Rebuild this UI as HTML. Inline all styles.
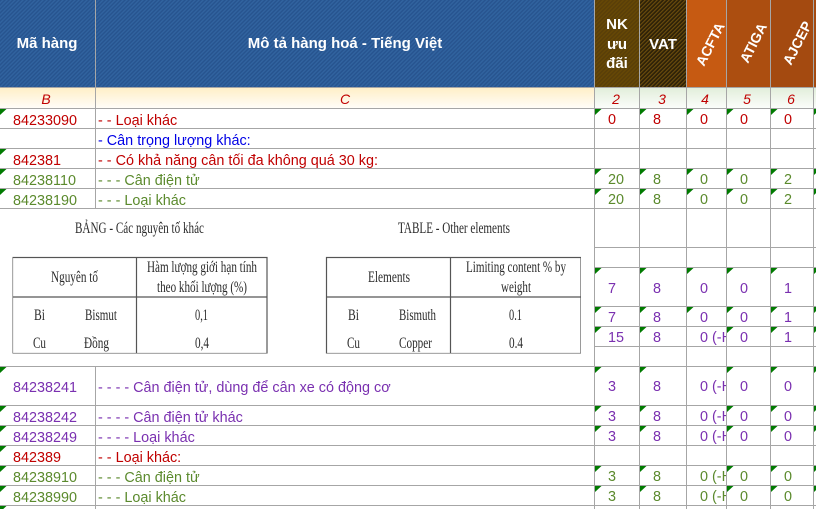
<!DOCTYPE html>
<html><head><meta charset="utf-8"><style>
html,body{margin:0;padding:0;background:#fff}
svg{display:block}
text{font-family:"Liberation Sans",sans-serif}
.r{fill:#c00000}.b{fill:#0000e6}.g{fill:#5b8a2d}.p{fill:#7a30b0}
.t{font-size:14.4px}
.h{font-size:15px;font-weight:bold;fill:#fff}
.h2{font-size:14px;font-weight:bold;fill:#fff}
.i{font-size:14px;font-style:italic;fill:#c00000}
.s text{font-family:"Liberation Serif",serif;font-size:16px;fill:#2b2b2b}
</style></head><body>
<svg xmlns="http://www.w3.org/2000/svg" width="816" height="509" viewBox="0 0 816 509">
<defs>
<pattern id="pb" width="2.83" height="2.83" patternUnits="userSpaceOnUse" patternTransform="rotate(-45)"><rect width="2.83" height="2.83" fill="#31639f"/><rect width="2.83" height="1.41" fill="#27548f"/></pattern>
<pattern id="pn" width="2.83" height="2.83" patternUnits="userSpaceOnUse" patternTransform="rotate(-45)"><rect width="2.83" height="2.83" fill="#664806"/><rect width="2.83" height="1.41" fill="#593e08"/></pattern>
<pattern id="pv" width="2.83" height="2.83" patternUnits="userSpaceOnUse" patternTransform="rotate(-45)"><rect width="2.83" height="2.83" fill="#2c2008"/><rect width="2.83" height="1.2" fill="#6a4c0c"/></pattern>
<linearGradient id="gy" x1="0" y1="0" x2="0" y2="1"><stop offset="0" stop-color="#ffefc8"/><stop offset="1" stop-color="#fffdf8"/></linearGradient>
<linearGradient id="gg" x1="0" y1="0" x2="0" y2="1"><stop offset="0" stop-color="#e2eedb"/><stop offset="1" stop-color="#fbfdfa"/></linearGradient>
<clipPath id="c"><rect x="686" y="300" width="40" height="209"/></clipPath>
<filter id="bl" x="0" y="0" width="100%" height="100%"><feGaussianBlur stdDeviation="0.35"/></filter>
<path id="tr" d="M0 0H6.5L0 6Z" fill="#007a00"/>
</defs>

<!-- header -->
<rect x="0" y="0" width="594" height="87" fill="url(#pb)"/>
<rect x="594" y="0" width="45" height="87" fill="url(#pn)"/>
<rect x="639" y="0" width="47" height="87" fill="url(#pv)"/>
<rect x="686" y="0" width="40" height="87" fill="#c65a12"/>
<rect x="726" y="0" width="44" height="87" fill="#ac4e10"/>
<rect x="770" y="0" width="46" height="87" fill="#a44a10"/>

<!-- label row -->
<rect x="0" y="88" width="594" height="20" fill="url(#gy)"/>
<rect x="594" y="88" width="222" height="20" fill="url(#gg)"/>

<!-- image area -->
<g class="s" filter="url(#bl)">
<text x="75" y="233" textLength="129" lengthAdjust="spacingAndGlyphs">BẢNG - Các nguyên tố khác</text>
<text x="398" y="233" textLength="112" lengthAdjust="spacingAndGlyphs">TABLE - Other elements</text>
<g fill="none" stroke="#555" stroke-width="1.2">
<rect x="12.5" y="257.5" width="254.5" height="96"/><path d="M12.5 297H267M136.5 257.5V353.5"/>
<rect x="326.5" y="257.5" width="254.5" height="96"/><path d="M326.5 297H581M450.5 257.5V353.5"/>
</g>
<text x="51" y="282" textLength="47" lengthAdjust="spacingAndGlyphs">Nguyên tố</text>
<text x="147" y="272" textLength="110" lengthAdjust="spacingAndGlyphs">Hàm lượng giới hạn tính</text>
<text x="157" y="292" textLength="90" lengthAdjust="spacingAndGlyphs">theo khối lượng (%)</text>
<text x="34" y="320" textLength="11" lengthAdjust="spacingAndGlyphs">Bi</text>
<text x="85" y="320" textLength="32" lengthAdjust="spacingAndGlyphs">Bismut</text>
<text x="195" y="320" textLength="13" lengthAdjust="spacingAndGlyphs">0,1</text>
<text x="33" y="348" textLength="13" lengthAdjust="spacingAndGlyphs">Cu</text>
<text x="84" y="348" textLength="25" lengthAdjust="spacingAndGlyphs">Đồng</text>
<text x="195" y="348" textLength="14" lengthAdjust="spacingAndGlyphs">0,4</text>
<text x="368" y="282" textLength="42" lengthAdjust="spacingAndGlyphs">Elements</text>
<text x="466" y="272" textLength="100" lengthAdjust="spacingAndGlyphs">Limiting content % by</text>
<text x="501" y="292" textLength="30" lengthAdjust="spacingAndGlyphs">weight</text>
<text x="348" y="320" textLength="11" lengthAdjust="spacingAndGlyphs">Bi</text>
<text x="399" y="320" textLength="37" lengthAdjust="spacingAndGlyphs">Bismuth</text>
<text x="509" y="320" textLength="13" lengthAdjust="spacingAndGlyphs">0.1</text>
<text x="347" y="348" textLength="13" lengthAdjust="spacingAndGlyphs">Cu</text>
<text x="399" y="348" textLength="33" lengthAdjust="spacingAndGlyphs">Copper</text>
<text x="509" y="348" textLength="14" lengthAdjust="spacingAndGlyphs">0.4</text>
</g>

<!-- grid -->
<g fill="#a6a6a6">
<rect x="0" y="87" width="816" height="1"/><rect x="0" y="108" width="816" height="1"/>
<rect x="0" y="128" width="816" height="1"/><rect x="0" y="148" width="816" height="1"/>
<rect x="0" y="168" width="816" height="1"/><rect x="0" y="188" width="816" height="1"/>
<rect x="0" y="208" width="816" height="1"/>
<rect x="594" y="247" width="222" height="1"/><rect x="594" y="267" width="222" height="1"/>
<rect x="594" y="306" width="222" height="1"/><rect x="594" y="326" width="222" height="1"/>
<rect x="594" y="346" width="222" height="1"/>
<rect x="0" y="366" width="816" height="1"/><rect x="0" y="405" width="816" height="1"/>
<rect x="0" y="425" width="816" height="1"/><rect x="0" y="445" width="816" height="1"/>
<rect x="0" y="465" width="816" height="1"/><rect x="0" y="485" width="816" height="1"/>
<rect x="0" y="505" width="816" height="1"/>
<rect x="95" y="0" width="1" height="209"/><rect x="95" y="366" width="1" height="143"/>
<rect x="594" y="0" width="1" height="509"/><rect x="639" y="0" width="1" height="509"/>
<rect x="686" y="0" width="1" height="509"/><rect x="726" y="0" width="1" height="509"/>
<rect x="770" y="0" width="1" height="509"/><rect x="813" y="0" width="1" height="509"/>
</g>

<!-- header text -->
<text class="h" x="47" y="48" text-anchor="middle">Mã hàng</text>
<text class="h" x="345" y="48" text-anchor="middle">Mô tả hàng hoá - Tiếng Việt</text>
<text class="h" x="617" y="29" text-anchor="middle">NK</text>
<text class="h" x="617" y="49" text-anchor="middle">ưu</text>
<text class="h" x="617" y="68" text-anchor="middle">đãi</text>
<text class="h" x="663" y="49" text-anchor="middle">VAT</text>
<text class="h2" transform="translate(704,67) rotate(-63)">ACFTA</text>
<text class="h2" transform="translate(748,64) rotate(-63)">ATIGA</text>
<text class="h2" transform="translate(791,66) rotate(-63)">AJCEP</text>

<!-- labels -->
<g class="i" text-anchor="middle">
<text x="46" y="104">B</text><text x="345" y="104">C</text><text x="616" y="104">2</text>
<text x="662" y="104">3</text><text x="705" y="104">4</text><text x="747" y="104">5</text><text x="791" y="104">6</text>
</g>

<!-- codes + descriptions -->
<g class="t">
<g class="r"><text x="13" y="125">84233090</text><text x="98" y="125">- - Loại khác</text></g>
<text class="b" x="98" y="145">- Cân trọng lượng khác:</text>
<g class="r"><text x="13" y="165">842381</text><text x="98" y="165">- - Có khả năng cân tối đa không quá 30 kg:</text></g>
<g class="g"><text x="13" y="185">84238110</text><text x="98" y="185">- - - Cân điện tử</text>
<text x="13" y="205">84238190</text><text x="98" y="205">- - - Loại khác</text></g>
<g class="p"><text x="13" y="392">84238241</text><text x="98" y="392">- - - - Cân điện tử, dùng để cân xe có động cơ</text>
<text x="13" y="422">84238242</text><text x="98" y="422">- - - - Cân điện tử khác</text>
<text x="13" y="442">84238249</text><text x="98" y="442">- - - - Loại khác</text></g>
<g class="r"><text x="13" y="462">842389</text><text x="98" y="462">- - Loại khác:</text></g>
<g class="g"><text x="13" y="482">84238910</text><text x="98" y="482">- - - Cân điện tử</text>
<text x="13" y="502">84238990</text><text x="98" y="502">- - - Loại khác</text></g>

<!-- numbers -->
<g class="r"><text x="608" y="124">0</text><text x="653" y="124">8</text><text x="700" y="124">0</text><text x="740" y="124">0</text><text x="784" y="124">0</text></g>
<g class="g">
<text x="608" y="184">20</text><text x="653" y="184">8</text><text x="700" y="184">0</text><text x="740" y="184">0</text><text x="784" y="184">2</text>
<text x="608" y="204">20</text><text x="653" y="204">8</text><text x="700" y="204">0</text><text x="740" y="204">0</text><text x="784" y="204">2</text>
<text x="608" y="481">3</text><text x="653" y="481">8</text><text x="700" y="481" clip-path="url(#c)">0 (-HK)</text><text x="740" y="481">0</text><text x="784" y="481">0</text>
<text x="608" y="501">3</text><text x="653" y="501">8</text><text x="700" y="501" clip-path="url(#c)">0 (-HK)</text><text x="740" y="501">0</text><text x="784" y="501">0</text>
</g>
<g class="p">
<text x="608" y="293">7</text><text x="653" y="293">8</text><text x="700" y="293">0</text><text x="740" y="293">0</text><text x="784" y="293">1</text>
<text x="608" y="322">7</text><text x="653" y="322">8</text><text x="700" y="322">0</text><text x="740" y="322">0</text><text x="784" y="322">1</text>
<text x="608" y="342">15</text><text x="653" y="342">8</text><text x="700" y="342" clip-path="url(#c)">0 (-HK)</text><text x="740" y="342">0</text><text x="784" y="342">1</text>
<text x="608" y="391">3</text><text x="653" y="391">8</text><text x="700" y="391" clip-path="url(#c)">0 (-HK)</text><text x="740" y="391">0</text><text x="784" y="391">0</text>
<text x="608" y="421">3</text><text x="653" y="421">8</text><text x="700" y="421" clip-path="url(#c)">0 (-HK)</text><text x="740" y="421">0</text><text x="784" y="421">0</text>
<text x="608" y="441">3</text><text x="653" y="441">8</text><text x="700" y="441" clip-path="url(#c)">0 (-HK)</text><text x="740" y="441">0</text><text x="784" y="441">0</text>
</g>
</g>

<!-- triangles col A -->
<use href="#tr" x="0" y="109"/><use href="#tr" x="0" y="149"/><use href="#tr" x="0" y="169"/><use href="#tr" x="0" y="189"/>
<use href="#tr" x="0" y="367"/><use href="#tr" x="0" y="406"/><use href="#tr" x="0" y="426"/><use href="#tr" x="0" y="446"/><use href="#tr" x="0" y="466"/><use href="#tr" x="0" y="486"/><use href="#tr" x="0" y="506"/>
<!-- triangles: all six number cols -->
<g><use href="#tr" x="595" y="109"/><use href="#tr" x="640" y="109"/><use href="#tr" x="687" y="109"/><use href="#tr" x="727" y="109"/><use href="#tr" x="771" y="109"/><use href="#tr" x="814" y="109"/></g>
<g><use href="#tr" x="595" y="169"/><use href="#tr" x="640" y="169"/><use href="#tr" x="687" y="169"/><use href="#tr" x="727" y="169"/><use href="#tr" x="771" y="169"/><use href="#tr" x="814" y="169"/></g>
<g><use href="#tr" x="595" y="189"/><use href="#tr" x="640" y="189"/><use href="#tr" x="687" y="189"/><use href="#tr" x="727" y="189"/><use href="#tr" x="771" y="189"/><use href="#tr" x="814" y="189"/></g>
<g><use href="#tr" x="595" y="268"/><use href="#tr" x="640" y="268"/><use href="#tr" x="687" y="268"/><use href="#tr" x="727" y="268"/><use href="#tr" x="771" y="268"/><use href="#tr" x="814" y="268"/></g>
<g><use href="#tr" x="595" y="307"/><use href="#tr" x="640" y="307"/><use href="#tr" x="687" y="307"/><use href="#tr" x="727" y="307"/><use href="#tr" x="771" y="307"/><use href="#tr" x="814" y="307"/></g>
<!-- triangles: no ACFTA column -->
<g><use href="#tr" x="595" y="327"/><use href="#tr" x="640" y="327"/><use href="#tr" x="727" y="327"/><use href="#tr" x="771" y="327"/><use href="#tr" x="814" y="327"/></g>
<g><use href="#tr" x="595" y="367"/><use href="#tr" x="640" y="367"/><use href="#tr" x="727" y="367"/><use href="#tr" x="771" y="367"/><use href="#tr" x="814" y="367"/></g>
<g><use href="#tr" x="595" y="406"/><use href="#tr" x="640" y="406"/><use href="#tr" x="727" y="406"/><use href="#tr" x="771" y="406"/><use href="#tr" x="814" y="406"/></g>
<g><use href="#tr" x="595" y="426"/><use href="#tr" x="640" y="426"/><use href="#tr" x="727" y="426"/><use href="#tr" x="771" y="426"/><use href="#tr" x="814" y="426"/></g>
<g><use href="#tr" x="595" y="466"/><use href="#tr" x="640" y="466"/><use href="#tr" x="727" y="466"/><use href="#tr" x="771" y="466"/><use href="#tr" x="814" y="466"/></g>
<g><use href="#tr" x="595" y="486"/><use href="#tr" x="640" y="486"/><use href="#tr" x="727" y="486"/><use href="#tr" x="771" y="486"/><use href="#tr" x="814" y="486"/></g>
</svg>
</body></html>
